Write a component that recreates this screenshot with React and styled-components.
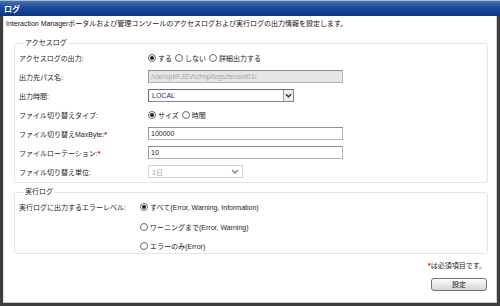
import React from "react";
import styled, { createGlobalStyle } from "styled-components";

const Global = createGlobalStyle`
  html, body { margin: 0; padding: 0; background: #fff; }
  body { font-family: "Liberation Sans", "Noto Sans CJK JP", sans-serif; font-size: 7px; color: #1c1c1c; }
`;

const Frame = styled.div`
  width: 500px;
  height: 306px;
  display: flex;
  flex-direction: column;
  background: #fff;
  overflow: hidden;
`;

const TitleBar = styled.div`
  height: 15px;
  background: linear-gradient(#4473bd, #1a4a98 45%, #0b3683);
  border-top: 1px solid #b8b8b8;
  color: #fff;
  font-weight: bold;
  font-size: 8px;
  line-height: 15px;
  padding-left: 4px;
  font-family: "Noto Sans CJK JP", sans-serif;
`;

const Panel = styled.div`
  flex: 1;
  display: flex;
  border-left: 3px solid #3d3d3d;
  border-right: 3px solid #3d3d3d;
  border-bottom: 3px solid #3d3d3d;
`;

const Body = styled.div`
  flex: 1;
  display: flex;
  flex-direction: column;
  padding: 3px 8px 0 2px;
  border-right: 1px solid #d4d4d4;
  border-bottom: 1px solid #c8c8c8;
  border-left: 1px solid #e0e0e0;
`;

const Desc = styled.div`
  line-height: 10px;
  white-space: nowrap;
  color: #111;
`;

const Fieldset = styled.fieldset`
  margin: ${p => p.$mt}px 0 0 8px;
  padding: 0 0 ${p => p.$pb}px 4px;
  border: 1px solid #dfe5ec;
  border-radius: 3px;
  min-width: 0;
  height: ${p => (p.$h ? `${p.$h}px` : "auto")};
  box-sizing: border-box;
`;

const Legend = styled.legend`
  padding: 0 2px;
  margin-left: 4px;
  line-height: 10px;
`;

const Row = styled.div`
  display: flex;
  align-items: center;
  height: ${p => p.$h || 19}px;
`;

const Label = styled.div`
  width: ${p => p.$w || 129}px;
  flex: none;
  white-space: nowrap;
`;

const Req = styled.span`
  color: #d40000;
  font-weight: bold;
`;

const RadioGroup = styled.div`
  display: flex;
  align-items: center;
  gap: 3px;
`;

const RadioItem = styled.label`
  display: flex;
  align-items: center;
  gap: 2px;
  white-space: nowrap;
`;

const RadioCircle = styled.span`
  width: 8px;
  height: 8px;
  border-radius: 50%;
  border: 1px solid #6a6a6a;
  box-sizing: border-box;
  display: inline-flex;
  align-items: center;
  justify-content: center;
  background: #fff;
  &::after {
    content: "";
    width: 4px;
    height: 4px;
    border-radius: 50%;
    background: ${p => (p.$on ? "#222" : "transparent")};
  }
`;

const Input = styled.div`
  width: ${p => p.$w}px;
  height: 13px;
  box-sizing: border-box;
  border: 1px solid #b4b4b4;
  border-top-color: #8c8c8c;
  border-left-color: #9a9a9a;
  background: ${p => (p.$disabled ? "#e6e6e6" : "#fff")};
  color: ${p => (p.$disabled ? "#a8a8a8" : "#222")};
  line-height: 11px;
  padding-left: 2px;
  white-space: nowrap;
  overflow: hidden;
`;

const Select = styled.div`
  width: ${p => p.$w}px;
  height: 13px;
  box-sizing: border-box;
  border: 1px solid ${p => (p.$disabled ? "#d6d6d6" : "#8a8a8a")};
  border-top-color: ${p => (p.$disabled ? "#d6d6d6" : "#6a6a6a")};
  border-left-color: ${p => (p.$disabled ? "#d6d6d6" : "#6a6a6a")};
  background: #fff;
  display: flex;
  align-items: center;
  justify-content: space-between;
  color: ${p => (p.$disabled ? "#a8a8a8" : "#1b2f72")};
  padding-left: 3px;
`;

const Arrow = styled.span`
  width: ${p => (p.$boxed ? 10 : 14)}px;
  height: 100%;
  box-sizing: border-box;
  display: flex;
  align-items: center;
  justify-content: center;
  border-left: ${p => (p.$boxed ? "1px solid #a0a0a0" : "none")};
  background: ${p => (p.$boxed ? "#eeeeee" : "transparent")};
`;

const ReqNote = styled.div`
  text-align: right;
  margin-top: 7px;
  margin-right: 2px;
  line-height: 10px;
`;

const ButtonRow = styled.div`
  display: flex;
  justify-content: flex-end;
  margin-top: 7px;
  margin-right: 1px;
`;

const Button = styled.button`
  width: 56px;
  height: 13px;
  padding: 0;
  border: 1px solid #707070;
  border-radius: 3px;
  background: linear-gradient(#fdfdfd, #e8e8e8 55%, #d6d6d6);
  font-family: "Noto Sans CJK JP", sans-serif;
  font-size: 7px;
  line-height: 11px;
  color: #222;
`;

const Radio = ({ on, children }) => (
  <RadioItem>
    <RadioCircle $on={on} />
    {children}
  </RadioItem>
);

const Chevron = ({ color = "#1b2d6b", w = 7 }) => (
  <svg width={w} height="5" viewBox="0 0 8 5">
    <path d="M1 1 L4 4 L7 1" fill="none" stroke={color} strokeWidth="1.5" />
  </svg>
);

export default function App() {
  return (
    <>
      <Global />
      <Frame>
        <TitleBar>ログ</TitleBar>
        <Panel>
          <Body>
            <Desc>Interaction Managerポータルおよび管理コンソールのアクセスログおよび実行ログの出力情報を設定します。</Desc>
            <Fieldset $mt={9} $pb={1}>
              <Legend>アクセスログ</Legend>
              <Row>
                <Label>アクセスログの出力:</Label>
                <RadioGroup>
                  <Radio on>する</Radio>
                  <Radio>しない</Radio>
                  <Radio>詳細出力する</Radio>
                </RadioGroup>
              </Row>
              <Row>
                <Label>出力先パス名:</Label>
                <Input $w={195} $disabled>/var/opt/FJSVrcfmp/logs/tenant01/</Input>
              </Row>
              <Row>
                <Label>出力時間:</Label>
                <Select $w={146}>
                  LOCAL
                  <Arrow $boxed><Chevron /></Arrow>
                </Select>
              </Row>
              <Row>
                <Label>ファイル切り替えタイプ:</Label>
                <RadioGroup>
                  <Radio on>サイズ</Radio>
                  <Radio>時間</Radio>
                </RadioGroup>
              </Row>
              <Row>
                <Label>ファイル切り替えMaxByte:<Req>*</Req></Label>
                <Input $w={195}>100000</Input>
              </Row>
              <Row>
                <Label>ファイルローテーション:<Req>*</Req></Label>
                <Input $w={195}>10</Input>
              </Row>
              <Row>
                <Label>ファイル切り替え単位:</Label>
                <Select $w={95} $disabled>
                  1日
                  <Arrow><Chevron color="#8a8a8a" w={8} /></Arrow>
                </Select>
              </Row>
            </Fieldset>
            <Fieldset $mt={4} $pb={0} $h={67}>
              <Legend>実行ログ</Legend>
              <Row $h={20}>
                <Label $w={121}>実行ログに出力するエラーレベル:</Label>
                <Radio on>すべて(Error, Warning, Information)</Radio>
              </Row>
              <Row $h={19}>
                <Label $w={121} />
                <Radio>ワーニングまで(Error, Warning)</Radio>
              </Row>
              <Row $h={19}>
                <Label $w={121} />
                <Radio>エラーのみ(Error)</Radio>
              </Row>
            </Fieldset>
            <ReqNote><Req>*</Req>は必須項目です。</ReqNote>
            <ButtonRow>
              <Button>設定</Button>
            </ButtonRow>
          </Body>
        </Panel>
      </Frame>
    </>
  );
}
